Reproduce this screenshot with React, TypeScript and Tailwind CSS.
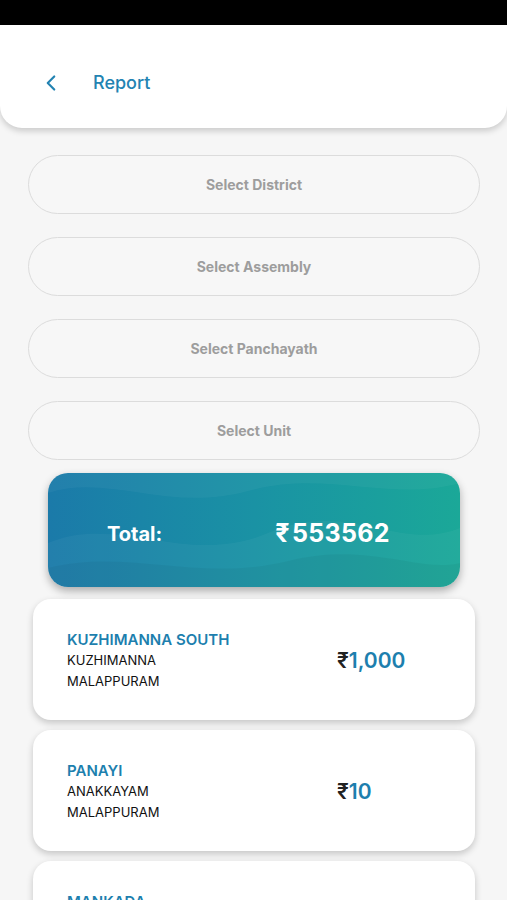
import { ChevronLeft } from "lucide-react";

const rows = [
  { name: "KUZHIMANNA SOUTH", panchayath: "KUZHIMANNA", district: "MALAPPURAM", amount: "1,000" },
  { name: "PANAYI", panchayath: "ANAKKAYAM", district: "MALAPPURAM", amount: "10" },
  { name: "MANKADA", panchayath: "MANKADA", district: "MALAPPURAM", amount: "250" },
];

const selects = ["Select District", "Select Assembly", "Select Panchayath", "Select Unit"];

function WaveBg() {
  return (
    <svg className="absolute inset-0 h-full w-full" viewBox="0 0 412 114" preserveAspectRatio="none">
      <path d="M0 20 C60 0 120 40 200 18 C280 -4 340 30 412 10 L412 0 L0 0 Z" fill="#ffffff" opacity="0.04" />
      <path d="M0 70 C70 40 140 95 220 60 C300 25 350 80 412 55 L412 114 L0 114 Z" fill="#ffffff" opacity="0.04" />
      <path d="M0 95 C80 75 150 110 240 88 C320 68 370 100 412 90 L412 114 L0 114 Z" fill="#000000" opacity="0.04" />
    </svg>
  );
}

export default function App() {
  return (
    <main className="h-[900px] overflow-hidden bg-[#f6f6f6] font-['Inter',sans-serif]">
      <div className="h-[25px] bg-black" />
      <header className="flex h-[103px] items-center rounded-b-[22px] bg-white pl-[38px] pt-[12px] shadow-[0_3px_6px_rgba(0,0,0,0.18)]">
        <ChevronLeft className="h-[26px] w-[26px] text-[#2383b2]" strokeWidth={2} />
        <h1 className="ml-[29px] text-[18px] font-medium text-[#2383b2]">Report</h1>
      </header>

      <div className="flex flex-col gap-[23px] pl-[28px] pr-[27px] pt-[27px]">
        {selects.map((s) => (
          <button
            key={s}
            className="flex h-[59px] items-center justify-center rounded-full border border-[#dcdcdc] bg-[#f7f7f7] text-[14px] font-bold text-[#9d9d9d]"
          >
            {s}
          </button>
        ))}
      </div>

      <div className="relative ml-[48px] mr-[47px] mt-[13px] flex h-[114px] items-center overflow-hidden rounded-[20px] bg-gradient-to-r from-[#1b7aa9] via-[#1a92a4] to-[#1ba898] pt-[8px] shadow-[0_4px_8px_rgba(0,0,0,0.3)]">
        <WaveBg />
        <span className="relative pl-[59px] text-[20px] font-bold text-white">Total:</span>
        <span className="relative ml-[113px] text-[25px] font-bold tracking-[0.3px] text-white">₹&#8202;553562</span>
      </div>

      <div className="ml-[33px] mr-[32px] mt-[12px] flex flex-col gap-[10px]">
        {rows.map((r) => (
          <div
            key={r.name}
            className="flex h-[121px] items-center rounded-[18px] bg-white pl-[34px] pt-[2px] shadow-[0_3px_7px_rgba(0,0,0,0.2)]"
          >
            <div className="w-[270px]">
              <div className="text-[15px] font-semibold leading-[21px] text-[#1d7fae]">{r.name}</div>
              <div className="text-[13px] leading-[21px] text-[#111]">{r.panchayath}</div>
              <div className="text-[13px] leading-[21px] text-[#111]">{r.district}</div>
            </div>
            <div className="text-[21px] font-semibold">
              <span className="text-[#222]">₹</span>
              <span className="text-[#1d7fae]">{r.amount}</span>
            </div>
          </div>
        ))}
      </div>
    </main>
  );
}
